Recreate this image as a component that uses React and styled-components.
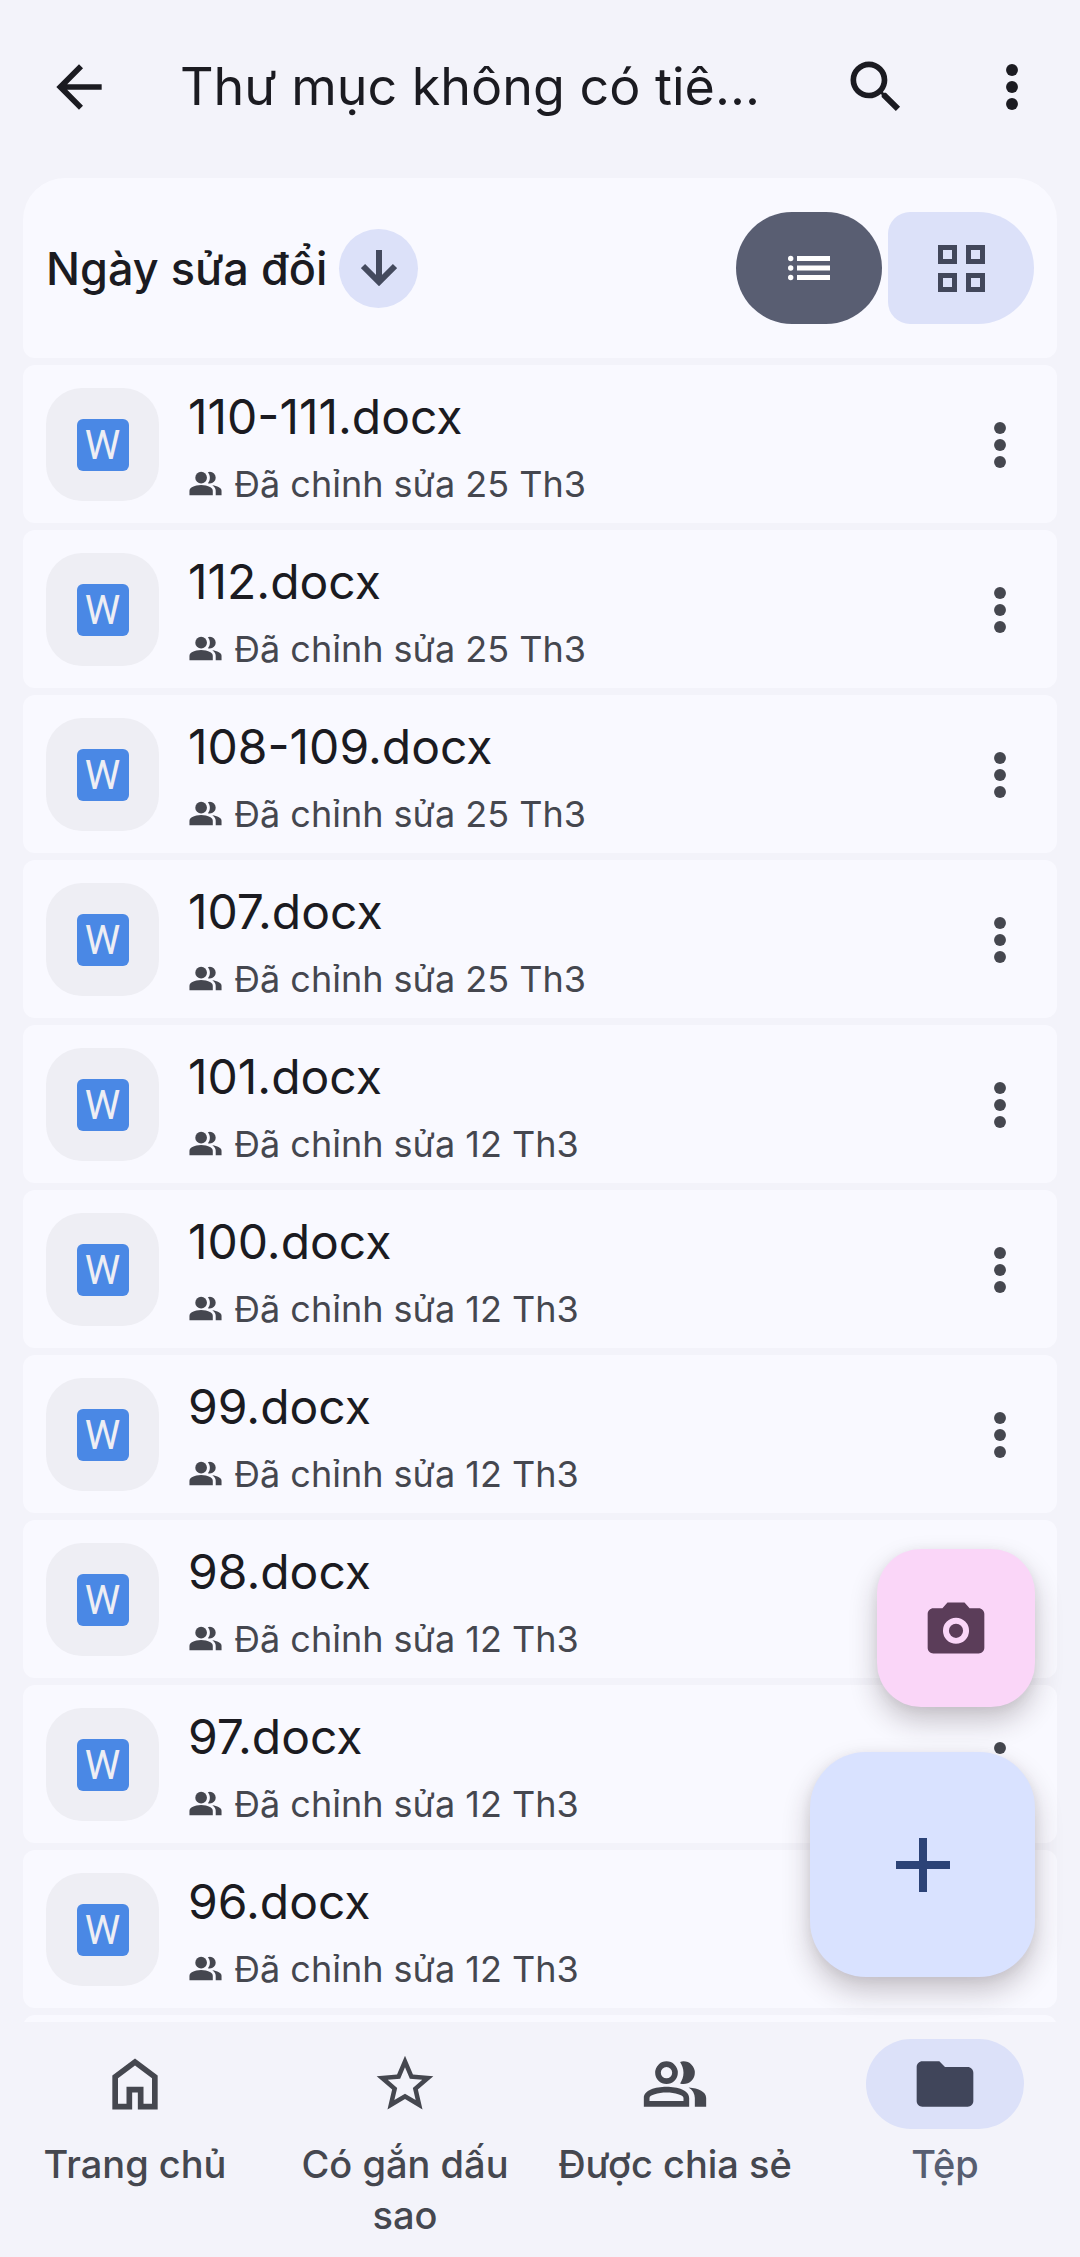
import React from 'react'
import styled, { createGlobalStyle } from 'styled-components'

const GlobalStyle = createGlobalStyle`
  * {
    box-sizing: border-box;
  }
  body {
    margin: 0;
    background: #f3f3fa;
    color: #1b1b21;
    font-family: Inter, Roboto, sans-serif;
  }
  button {
    border: none;
    padding: 0;
    margin: 0;
    background: none;
    font: inherit;
    color: inherit;
    cursor: pointer;
  }
  svg {
    display: block;
  }
`

const Screen = styled.div`
  display: flex;
  flex-direction: column;
  height: 100vh;
`
const TopBar = styled.header`
  display: flex;
  align-items: center;
  flex-shrink: 0;
  padding: 53px 34px 57px 45px;
`
const Title = styled.h1`
  flex: 1;
  min-width: 0;
  margin: 0 24px 0 67px;
  overflow: hidden;
  white-space: nowrap;
  font-size: 52px;
  font-weight: 400;
  line-height: 68px;
`
const BarActions = styled.div`
  display: flex;
  gap: 68px;
`
const IconButton = styled.button`
  flex-shrink: 0;
  width: 68px;
  height: 68px;
  color: ${(p) => (p.$soft ? '#45474f' : '#1b1b21')};
`

const Main = styled.main`
  position: relative;
  flex: 1;
  min-height: 0;
`
const Scroller = styled.div`
  height: 100%;
  overflow: hidden;
  padding: 0 23px;
`
const SortBar = styled.div`
  display: flex;
  align-items: center;
  justify-content: space-between;
  padding: 34px 23px;
  background: #f9f9ff;
  border-radius: 42px 42px 12px 12px;
`
const SortButton = styled.button`
  display: flex;
  align-items: center;
  gap: 12px;
  font-size: 45px;
  font-weight: 500;
`
const SortArrow = styled.span`
  display: flex;
  align-items: center;
  justify-content: center;
  width: 79px;
  height: 79px;
  border-radius: 50%;
  background: #dce1f9;
  color: #444a5e;
`
const ViewSwitch = styled.div`
  display: flex;
  gap: 6px;
`
const ViewButton = styled.button`
  display: flex;
  align-items: center;
  justify-content: center;
  width: 146px;
  height: 112px;
  border-radius: ${(p) => (p.$active ? '56px' : '22px 56px 56px 22px')};
  background: ${(p) => (p.$active ? '#595e72' : '#dce1f9')};
  color: ${(p) => (p.$active ? '#ffffff' : '#42475b')};
`

const FileList = styled.ul`
  display: flex;
  flex-direction: column;
  gap: 7px;
  margin: 7px 0 0;
  padding: 0;
  list-style: none;
`
const FileRow = styled.li`
  display: flex;
  align-items: center;
  min-height: 158px;
  padding: 23px 23px 22px;
  background: #f9f9ff;
  border-radius: 12px;
`
const Thumb = styled.div`
  display: flex;
  align-items: center;
  justify-content: center;
  flex-shrink: 0;
  width: 113px;
  height: 113px;
  border-radius: 36px;
  background: #eeeef4;
`
const WordBadge = styled.span`
  width: 52px;
  height: 52px;
  border-radius: 6px;
  background: #4a88e5;
  color: #eeeef4;
  font-family: Roboto, sans-serif;
  font-size: 40px;
  font-weight: 400;
  line-height: 54px;
  text-align: center;
`
const FileInfo = styled.div`
  display: flex;
  flex-direction: column;
  gap: 10px;
  flex: 1;
  min-width: 0;
  margin: -6px 0 -6px 29px;
`
const FileName = styled.span`
  font-size: 48px;
  line-height: 68px;
`
const FileMeta = styled.span`
  display: flex;
  align-items: center;
  gap: 11px;
  color: #45474f;
  font-size: 36px;
  line-height: 46px;
`

const Fabs = styled.div`
  position: absolute;
  right: 45px;
  bottom: 45px;
  display: flex;
  flex-direction: column;
  align-items: flex-end;
  gap: 45px;
`
const Fab = styled.button`
  display: flex;
  align-items: center;
  justify-content: center;
  width: ${(p) => (p.$large ? '225px' : '158px')};
  height: ${(p) => (p.$large ? '225px' : '158px')};
  border-radius: ${(p) => (p.$large ? '56px' : '44px')};
  background: ${(p) => (p.$large ? '#d9e2ff' : '#fad6f8')};
  color: ${(p) => (p.$large ? '#2c4377' : '#5b3d59')};
  box-shadow: 0 14px 28px rgba(40, 25, 35, 0.24), 0 2px 12px rgba(40, 25, 35, 0.06);
`

const BottomNav = styled.nav`
  position: relative;
  display: grid;
  grid-template-columns: repeat(4, 1fr);
  flex-shrink: 0;
  padding: 17px 0 16px;
  background: #f3f3fa;
`
const NavItem = styled.a`
  display: flex;
  flex-direction: column;
  align-items: center;
  gap: 10px;
  padding: 0 12px;
  color: ${(p) => (p.$active ? '#575e71' : '#45474f')};
  font-size: 38px;
  font-weight: 500;
  line-height: 51px;
  text-align: center;
  text-decoration: none;
`
const NavPill = styled.span`
  display: flex;
  align-items: center;
  justify-content: center;
  width: 158px;
  height: 90px;
  border-radius: 45px;
  background: ${(p) => (p.$active ? '#dce1f9' : 'transparent')};
  color: ${(p) => (p.$active ? '#40455a' : '#45474f')};
`

const Icon = ({ size = 68, children }) => (
  <svg width={size} height={size} viewBox="0 0 24 24" fill="currentColor" aria-hidden="true">
    {children}
  </svg>
)

const BackIcon = () => (
  <Icon>
    <path d="M20 11H7.83l5.59-5.59L12 4l-8 8 8 8 1.41-1.41L7.83 13H20z" />
  </Icon>
)
const SearchIcon = () => (
  <Icon>
    <path d="M15.5 14h-.79l-.28-.27A6.47 6.47 0 0 0 16 9.5 6.5 6.5 0 1 0 9.5 16c1.61 0 3.09-.59 4.23-1.57l.27.28v.79l5 4.99L20.49 19zm-6 0C7.01 14 5 11.99 5 9.5S7.01 5 9.5 5 14 7.01 14 9.5 11.99 14 9.5 14z" />
  </Icon>
)
const MoreIcon = () => (
  <Icon>
    <circle cx="12" cy="6" r="2.1" />
    <circle cx="12" cy="12" r="2.1" />
    <circle cx="12" cy="18" r="2.1" />
  </Icon>
)
const DownIcon = () => (
  <svg width="36" height="36" viewBox="0 0 36 36" fill="none" stroke="currentColor" strokeWidth="6" aria-hidden="true">
    <path d="M18 0v31M2 16l16 16 16-16" />
  </svg>
)
const ListIcon = () => (
  <svg width="42" height="26" viewBox="0 0 42 26" fill="currentColor" aria-hidden="true">
    <circle cx="2.7" cy="3.5" r="2.7" />
    <circle cx="2.7" cy="13" r="2.7" />
    <circle cx="2.7" cy="22.5" r="2.7" />
    <path d="M9 1h33v5H9zM9 10.5h33v5H9zM9 20h33v5H9z" />
  </svg>
)
const GridIcon = () => (
  <svg width="47" height="47" viewBox="0 0 47 47" fill="none" stroke="currentColor" strokeWidth="5" aria-hidden="true">
    <path d="M2.5 2.5h14v14h-14zM30.5 2.5h14v14h-14zM2.5 30.5h14v14h-14zM30.5 30.5h14v14h-14z" />
  </svg>
)
const PeopleIcon = () => (
  <Icon size={35}>
    <circle cx="9" cy="8" r="4" />
    <path d="M1 20v-2.8q0-.85.44-1.56T2.6 14.55q1.55-.77 3.15-1.16T9 13t3.25.39 3.15 1.16q.73.38 1.16 1.09T17 17.2V20z" />
    <path d="M19 20v-3q0-1.1-.61-2.11t-1.74-1.74q1.28.15 2.4.51t2.1.89q.9.5 1.38 1.11T23 17v3z" />
    <path d="M17.8 10.83Q16.63 12 15 12q-.27 0-.69-.06t-.69-.14q.67-.8 1.02-1.77T15 8t-.36-2.03-1.02-1.77q.35-.12.7-.16T15 4q1.65 0 2.83 1.18T19 8t-1.2 2.83z" />
  </Icon>
)
const HomeIcon = () => (
  <Icon>
    <path d="M6 19h3v-6h6v6h3v-9l-6-4.5L6 10zm-2 2V9l8-6 8 6v12h-7v-6h-2v6z" />
  </Icon>
)
const StarIcon = () => (
  <Icon>
    <path d="M22 9.24l-7.19-.62L12 2 9.19 8.63 2 9.24l5.46 4.73L5.82 21 12 17.27 18.18 21l-1.63-7.03zM12 15.4l-3.76 2.27 1-4.28-3.32-2.88 4.38-.38L12 6.1l1.71 4.04 4.38.38-3.32 2.88 1 4.28z" />
  </Icon>
)
const SharedIcon = () => (
  <Icon>
    <path
      fillRule="evenodd"
      d="M9 4a4 4 0 1 1 0 8 4 4 0 0 1 0-8zm0 2a2 2 0 1 0 0 4 2 2 0 0 0 0-4zM1 20v-3.1C1 14.3 5 13 9 13s8 1.3 8 3.9V20zm2-2h12v-1.1c0-1-3-1.9-6-1.9s-6 .9-6 1.9z"
    />
    <path d="M16.8 13.2c3.6.3 6.2 1.5 6.2 3.7V20h-4v-3.1c0-1.5-.8-2.8-2.2-3.7z" />
    <path d="M13.8 4.2C14.2 4.1 14.6 4 15 4a4 4 0 1 1 0 8c-.4 0-.8-.1-1.2-.2C14.5 10.7 15 9.5 15 8s-.5-2.7-1.2-3.8z" />
  </Icon>
)
const FolderIcon = () => (
  <Icon>
    <path d="M4 20c-1.1 0-2-.9-2-2V6c0-1.1.9-2 2-2h6l2 2h8c1.1 0 2 .9 2 2v10c0 1.1-.9 2-2 2z" />
  </Icon>
)
const CameraIcon = () => (
  <Icon>
    <path
      fillRule="evenodd"
      d="M9 3 7.2 5H4c-1.1 0-2 .9-2 2v12c0 1.1.9 2 2 2h16c1.1 0 2-.9 2-2V7c0-1.1-.9-2-2-2h-3.2L15 3zm3 5.4a4.6 4.6 0 1 1 0 9.2 4.6 4.6 0 0 1 0-9.2z"
    />
    <circle cx="12" cy="13" r="2.5" />
  </Icon>
)
const PlusIcon = () => (
  <svg width="54" height="54" viewBox="0 0 54 54" fill="none" stroke="currentColor" strokeWidth="8" aria-hidden="true">
    <path d="M27 0v54M0 27h54" />
  </svg>
)

const files = [
  { name: '110-111.docx', date: '25 Th3' },
  { name: '112.docx', date: '25 Th3' },
  { name: '108-109.docx', date: '25 Th3' },
  { name: '107.docx', date: '25 Th3' },
  { name: '101.docx', date: '12 Th3' },
  { name: '100.docx', date: '12 Th3' },
  { name: '99.docx', date: '12 Th3' },
  { name: '98.docx', date: '12 Th3' },
  { name: '97.docx', date: '12 Th3' },
  { name: '96.docx', date: '12 Th3' },
]

const tabs = [
  { label: 'Trang chủ', icon: <HomeIcon /> },
  { label: 'Có gắn dấu sao', icon: <StarIcon /> },
  { label: 'Được chia sẻ', icon: <SharedIcon /> },
  { label: 'Tệp', icon: <FolderIcon />, active: true },
]

function App() {
  return (
    <>
      <GlobalStyle />
      <Screen>
        <TopBar>
          <IconButton aria-label="Quay lại"><BackIcon /></IconButton>
          <Title>Thư mục không có tiê...</Title>
          <BarActions>
            <IconButton aria-label="Tìm kiếm"><SearchIcon /></IconButton>
            <IconButton aria-label="Tùy chọn khác"><MoreIcon /></IconButton>
          </BarActions>
        </TopBar>

        <Main>
          <Scroller>
            <SortBar>
              <SortButton>
                Ngày sửa đổi
                <SortArrow><DownIcon /></SortArrow>
              </SortButton>
              <ViewSwitch>
                <ViewButton $active aria-pressed="true" aria-label="Danh sách"><ListIcon /></ViewButton>
                <ViewButton aria-pressed="false" aria-label="Lưới"><GridIcon /></ViewButton>
              </ViewSwitch>
            </SortBar>

            <FileList>
              {files.map((file) => (
                <FileRow key={file.name}>
                  <Thumb><WordBadge>W</WordBadge></Thumb>
                  <FileInfo>
                    <FileName>{file.name}</FileName>
                    <FileMeta><PeopleIcon />Đã chỉnh sửa {file.date}</FileMeta>
                  </FileInfo>
                  <IconButton $soft aria-label={`Tùy chọn cho ${file.name}`}><MoreIcon /></IconButton>
                </FileRow>
              ))}
              <FileRow aria-hidden="true" />
            </FileList>
          </Scroller>

          <Fabs>
            <Fab aria-label="Quét"><CameraIcon /></Fab>
            <Fab $large aria-label="Mới"><PlusIcon /></Fab>
          </Fabs>
        </Main>

        <BottomNav>
          {tabs.map((tab) => (
            <NavItem key={tab.label} href="#" $active={tab.active}>
              <NavPill $active={tab.active}>{tab.icon}</NavPill>
              {tab.label}
            </NavItem>
          ))}
        </BottomNav>
      </Screen>
    </>
  )
}

export default App
